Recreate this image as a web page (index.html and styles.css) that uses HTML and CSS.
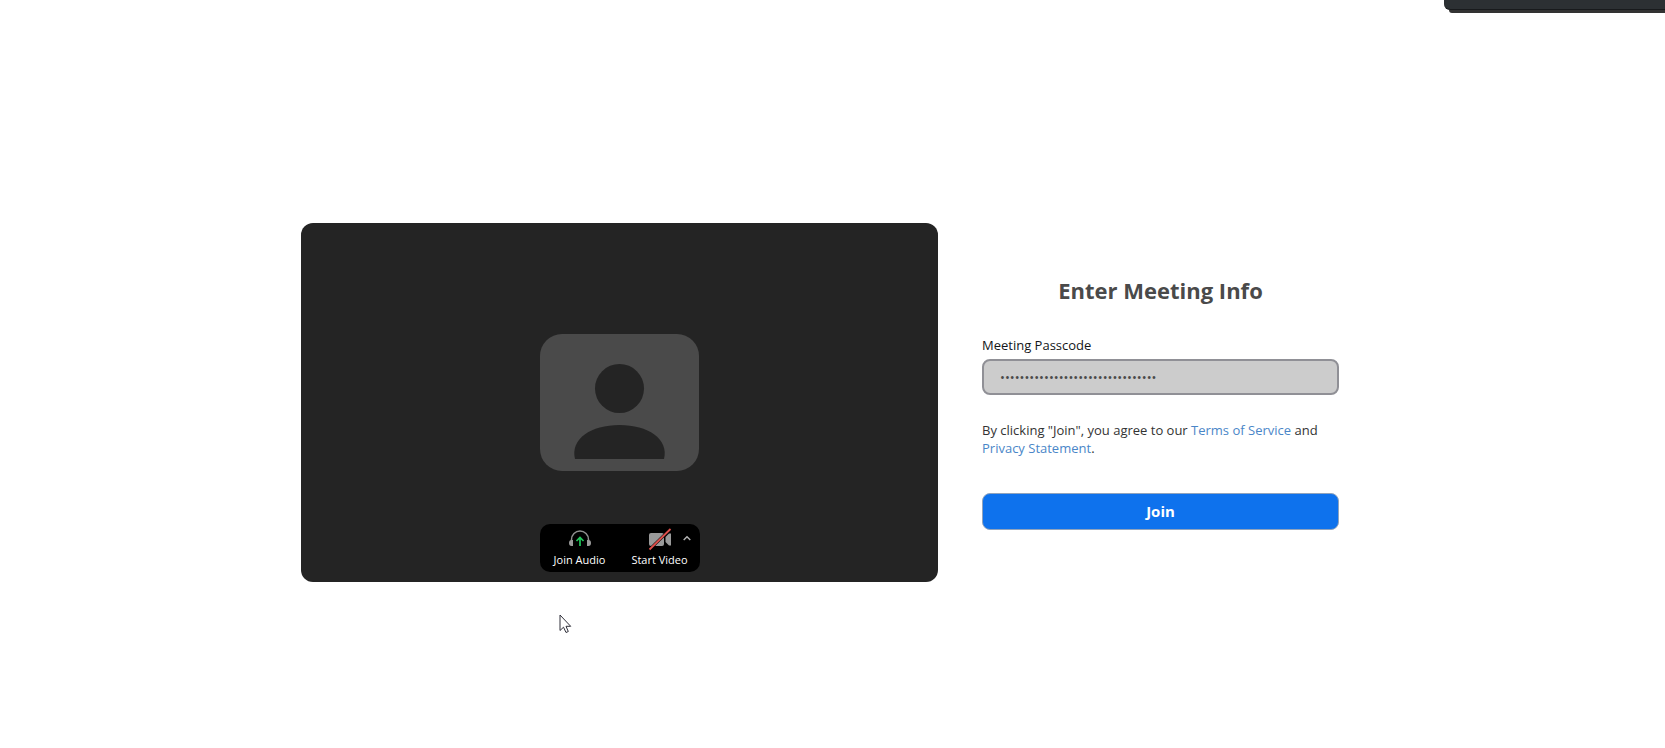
FILE: index.html
```html
<!DOCTYPE html>
<html lang="en">
  <head>
    <meta charset="UTF-8" />
    <meta name="viewport" content="width=device-width, initial-scale=1.0" />
    <title>Join Meeting</title>
    <link rel="stylesheet" href="styles.css">
  </head>
  <body>
    <div class="dock"></div>

    <main class="container">
      <section class="preview">
        <svg class="avatar" viewBox="0 0 159 137" aria-hidden="true">
          <rect width="159" height="137" rx="22" fill="#4a4a4a" />
          <circle cx="79.5" cy="54.5" r="24.5" fill="#242424" />
          <path d="M35 125C30 105 51 91 79.500 91S129 105 124 125Z" fill="#242424" />
        </svg>

        <div class="toolbar">
          <button type="button" class="tool">
            <svg class="tool-icon" width="24" height="20" viewBox="0 0 24 20" aria-hidden="true">
              <path d="M3.500 12V10.500a8.500 8.500 0 0 1 17 0V12" fill="none" stroke="#8f8f8f" stroke-width="1.500" />
              <path d="M5 11v6H3.500Q1 17 1 14t2.500-3ZM19 11v6h1.500q2.500 0 2.500-3t-2.500-3Z" fill="#9a9a9a" />
              <path d="M12 17V9M8.500 12 12 8.500l3.500 3.500" fill="none" stroke="#22c55a" stroke-width="1.700" />
            </svg>
            <span>Join Audio</span>
          </button>
          <div class="tool-group">
            <button type="button" class="tool">
              <svg class="tool-icon" width="24" height="20" viewBox="0 0 24 20" aria-hidden="true">
                <rect x="1" y="4" width="15" height="13" rx="2" fill="#9a9a9a" />
                <path d="M17.500 8 21 4.500h2v12h-2L17.500 13Z" fill="#9a9a9a" />
                <path d="M1.500 20.500 22.500 0" stroke="#000" stroke-width="3" />
                <path d="M1.500 20.500 22.500 0" stroke="#e0504c" stroke-width="1.800" />
              </svg>
              <span>Start Video</span>
            </button>
            <button type="button" class="caret" aria-label="Video options">
              <svg width="8" height="6" viewBox="0 0 8 6" aria-hidden="true">
                <path d="M.7 5 4 1.700 7.300 5" fill="none" stroke="#b5b5b5" stroke-width="1.400" />
              </svg>
            </button>
          </div>
        </div>
      </section>

      <form class="join-form">
        <h1 class="title">Enter Meeting Info</h1>
        <label class="label" for="passcode">Meeting Passcode</label>
        <input class="passcode" id="passcode" type="password" value="abcdefghijklmnopqrstuvwxyz012345" disabled />
        <p class="terms">
          By clicking "Join", you agree to our <a href="#">Terms of Service</a> and
          <a href="#">Privacy Statement</a>.
        </p>
        <button type="button" class="join-btn">Join</button>
      </form>
    </main>

    <svg class="cursor" width="13" height="20" viewBox="0 0 13 20" aria-hidden="true">
      <path d="M1 1V16.500L4.500 13.200 7 18.500 9.300 17.500 7 12.300H11.700Z" fill="#fff" stroke="#30303a" stroke-width="1" />
    </svg>
  </body>
</html>
```

FILE: styles.css
```css
* {
  box-sizing: border-box;
}
body {
  margin: 0;
  background-color: #fff;
  color: #333;
  font-family: "Open Sans", sans-serif;
  font-size: 13px;
  line-height: 18px;
}
button,
input {
  font-family: inherit;
}
.container {
  display: grid;
  grid-template-columns: minmax(0, 637px) minmax(0, 357px);
  justify-content: center;
  align-content: center;
  align-items: center;
  gap: 44px;
  min-height: 100vh;
  padding: 56px 25px 0 0;
}
.preview {
  display: grid;
  grid-template-rows: 1fr auto 1fr;
  justify-items: center;
  aspect-ratio: 637 / 359;
  padding: 10px;
  border-radius: 12px;
  background-color: #242424;
}
.avatar {
  grid-row: 2;
  width: 159px;
}
.toolbar {
  grid-row: 3;
  align-self: end;
  display: flex;
  border-radius: 10px;
  background-color: #000;
}
.tool {
  display: flex;
  flex-direction: column;
  align-items: center;
  gap: 3px;
  width: 80px;
  height: 48px;
  padding: 5px 0 0;
  border: 0;
  background: none;
  color: #fff;
  font-size: 11px;
  line-height: 16px;
  white-space: nowrap;
}
.tool-icon {
  overflow: visible;
}
.tool-group {
  position: relative;
}
.caret {
  position: absolute;
  top: 7px;
  right: 5px;
  display: flex;
  padding: 4px;
  border: 0;
  background: none;
}
.join-form {
  display: flex;
  flex-direction: column;
}
.title {
  margin: 0 0 31px;
  color: #4a4a4a;
  font-size: 22px;
  line-height: 30px;
  text-align: center;
}
.label {
  margin-bottom: 5px;
  color: #131619;
}
.passcode {
  width: 100%;
  height: 36px;
  padding: 0 16px;
  border: 2px solid #909096;
  border-radius: 8px;
  background-color: #ccc;
  color: #4a4a4a;
  font-size: 13px;
}
.terms {
  margin: 26px 0 36px;
}
.terms a {
  color: #4a86c8;
  text-decoration: none;
}
.join-btn {
  height: 37px;
  border: 1px solid #8fa3bd;
  border-radius: 8px;
  background-color: #0e72ed;
  color: #fff;
  font-size: 15px;
  font-weight: 700;
}
.dock {
  position: absolute;
  top: 0;
  right: 0;
  width: 221px;
  height: 10px;
  border-bottom: 1px solid #181a1c;
  border-bottom-left-radius: 6px;
  background-color: #2c3033;
}
.dock::after {
  content: "";
  position: absolute;
  top: 10px;
  right: 0;
  left: 5px;
  height: 3px;
  border-bottom-left-radius: 3px;
  background-color: #333;
}
.cursor {
  position: absolute;
  top: 614px;
  left: 559px;
}
@media (max-width: 900px) {
  .container {
    grid-template-columns: minmax(0, 637px);
    padding: 24px;
  }
}
```
